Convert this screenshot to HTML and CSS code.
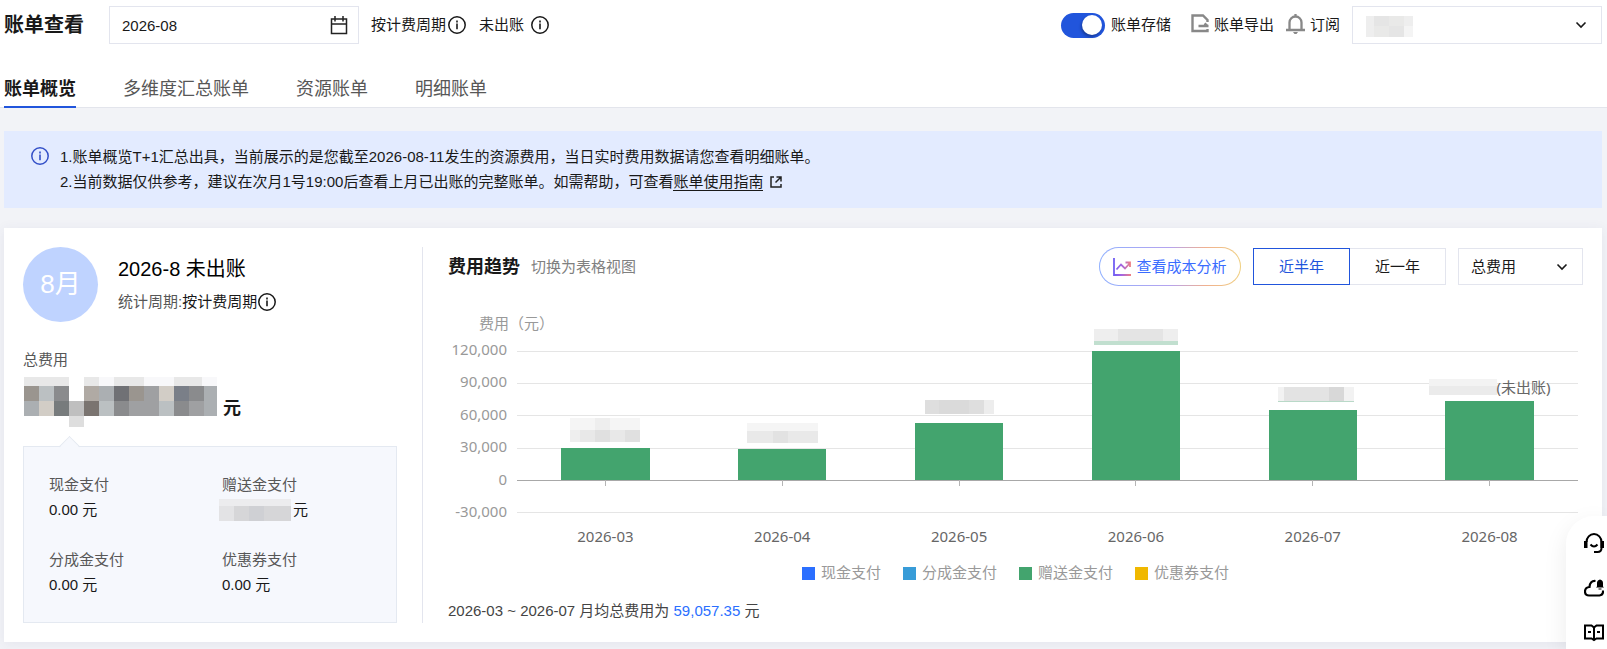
FILE: index.html
```html
<!DOCTYPE html>
<html lang="zh-CN">
<head>
    <meta charset="UTF-8">
    <meta name="viewport" content="width=device-width, initial-scale=1">
    <title>账单查看</title>
    <link rel="stylesheet" href="styles.css">
</head>
<body>

    <!-- shared icons -->
    <svg class="icon-defs" aria-hidden="true">
        <symbol id="icon-info" viewBox="0 0 18 18">
            <circle cx="9" cy="9" r="8.2" fill="none" stroke="currentColor" stroke-width="1.5"/>
            <path d="M9 7.6v5.6M9 4.6v1.8" fill="none" stroke="currentColor" stroke-width="1.6"/>
        </symbol>
        <symbol id="icon-down" viewBox="0 0 12 8">
            <path d="M1.500 1.500L6 6l4.500-4.500" fill="none" stroke="currentColor" stroke-width="1.6"/>
        </symbol>
    </svg>

    <header class="header">
        <div class="toolbar">
            <h1>账单查看</h1>
            <div class="field month-field">
                <input type="text" id="month" value="2026-08" aria-label="账期">
                <svg class="field-icon" width="18" height="19" viewBox="0 0 18 19" fill="none" stroke="#222" stroke-width="1.5">
                    <path d="M1.500 3h15v14.500h-15zM1.500 8h15M5 0v5.500M13 0v5.500"/>
                </svg>
            </div>
            <span class="hint">按计费周期<svg class="info"><use href="#icon-info"/></svg></span>
            <span class="hint hint-status">未出账<svg class="info"><use href="#icon-info"/></svg></span>

            <div class="actions">
                <label class="switch"><input type="checkbox" id="storage" checked>账单存储</label>
                <button class="action" type="button">
                    <svg width="18" height="19" viewBox="0 0 18 19" fill="none" stroke="#888" stroke-width="2.4">
                        <path d="M16.500 8V6L12 1.500H1.500v15.500H16.500V15M7.500 12h10M13.500 9.500l3 2.500"/>
                    </svg>账单导出
                </button>
                <button class="action" type="button">
                    <svg width="19" height="20" viewBox="0 0 19 20" fill="none" stroke="#888" stroke-width="2.3">
                        <path d="M0 16h19M3.500 16V8.500a6 6 0 0 1 12 0V16M9.500 0v2"/>
                        <path d="M7 18h5l-1.500 2h-2z" fill="#888" stroke="none"/>
                    </svg>订阅
                </button>
                <div class="field account-field">
                    <select id="account" aria-label="账号"><option></option></select>
                    <svg class="mosaic" width="47" height="21" viewBox="0 0 47 21" shape-rendering="crispEdges">
                        <path fill="#eee" d="M0 0h47v21H0z"/>
                        <path fill="#e5e5e5" d="M8 0h15v10H8zM23 10h15v11H23z"/>
                        <path fill="#e9e9e8" d="M23 0h15v10H23zM8 10h15v11H8z"/>
                        <path fill="#f4f4f4" d="M38 10h9v11h-9z"/>
                    </svg>
                    <svg class="down"><use href="#icon-down"/></svg>
                </div>
            </div>
        </div>

        <nav class="tabs">
            <a class="active" href="#overview">账单概览</a>
            <a href="#summary">多维度汇总账单</a>
            <a href="#resource">资源账单</a>
            <a href="#detail">明细账单</a>
        </nav>
    </header>

    <main>
        <section class="notice">
            <svg class="info"><use href="#icon-info"/></svg>
            <div>
                <p>1.账单概览T+1汇总出具，当前展示的是您截至2026-08-11发生的资源费用，当日实时费用数据请您查看明细账单。</p>
                <p>2.当前数据仅供参考，建议在次月1号19:00后查看上月已出账的完整账单。如需帮助，可查看<a href="#guide">账单使用指南</a>
                    <svg class="external" width="12" height="12" viewBox="0 0 12 12" fill="none" stroke="#222" stroke-width="1.500">
                        <path d="M4 1H1v10h10V8M6.500 1H11v4.500M11 1L5.500 6.500"/>
                    </svg>
                </p>
            </div>
        </section>

        <section class="card" id="overview">
            <div class="summary">
                <div class="bill-head">
                    <div class="month-badge">8月</div>
                    <div>
                        <h2>2026-8 未出账</h2>
                        <p class="cycle">统计周期:<span class="hint">按计费周期<svg class="info"><use href="#icon-info"/></svg></span></p>
                    </div>
                </div>
                <p class="total-label">总费用</p>
                <div class="total">
                    <svg width="193" height="50" viewBox="0 0 193 50" shape-rendering="crispEdges">
                        <path fill="#e8e8e8" d="M0 0h45v9H0zM60 0h15v9H60zM90 0h30v9H90zM150 0h28v9h-28z"/>
                        <path fill="#f8f8fa" d="M75 0h15v9H75zM120 0h30v9h-30zM178 0h15v9h-15z"/>
                        <path fill="#9a958f" d="M0 9h15v15H0zM105 9h15v15h-15z"/>
                        <path fill="#bbc0c2" d="M15 9h15v15H15zM75 24h15v15H75zM135 24h15v15h-15z"/>
                        <path fill="#8a8b8d" d="M30 9h15v15H30zM165 9h15v15h-15zM90 24h15v15H90zM150 24h15v15h-15z"/>
                        <path fill="#b0aaa4" d="M60 9h15v15H60z"/>
                        <path fill="#abafb2" d="M75 9h15v15H75zM180 9h13v30h-13zM0 24h15v15H0z"/>
                        <path fill="#707175" d="M90 9h15v15H90z"/>
                        <path fill="#9fa0a2" d="M120 9h15v30h-15zM105 24h15v15h-15zM165 24h15v15h-15z"/>
                        <path fill="#d2cdc6" d="M135 9h15v15h-15zM15 24h15v15H15z"/>
                        <path fill="#7a7f88" d="M150 9h15v15h-15z"/>
                        <path fill="#777b7c" d="M30 24h15v15H30z"/>
                        <path fill="#bfbfbf" d="M45 24h15v15H45z"/>
                        <path fill="#7a7470" d="M60 24h15v15H60z"/>
                        <path fill="#dedede" d="M45 39h15v11H45z"/>
                    </svg>
                    <strong>元</strong>
                </div>
                <dl class="breakdown">
                    <div>
                        <dt>现金支付</dt>
                        <dd>0.00 元</dd>
                    </div>
                    <div>
                        <dt>赠送金支付</dt>
                        <dd class="masked">
                            <svg width="72" height="22" viewBox="0 0 72 22" shape-rendering="crispEdges">
                                <path fill="#ececee" d="M0 0h72v7H0z"/>
                                <path fill="#e3e3e5" d="M0 7h15v15H0z"/>
                                <path fill="#d6d6d8" d="M15 7h57v15H15z"/>
                                <path fill="#cfd0d4" d="M30 7h15v15H30z"/>
                            </svg>元
                        </dd>
                    </div>
                    <div>
                        <dt>分成金支付</dt>
                        <dd>0.00 元</dd>
                    </div>
                    <div>
                        <dt>优惠券支付</dt>
                        <dd>0.00 元</dd>
                    </div>
                </dl>
            </div>

            <div class="trend">
                <div class="trend-head">
                    <h3>费用趋势</h3>
                    <a class="switch-view" href="#table">切换为表格视图</a>
                    <button class="analysis" type="button">
                        <svg width="18" height="18" viewBox="0 0 18 18" fill="none" stroke="url(#trend-color)" stroke-width="1.8">
                            <linearGradient id="trend-color" gradientUnits="userSpaceOnUse" x1="0" y1="0" x2="18" y2="0">
                                <stop offset="0" stop-color="#6a5cf5"/>
                                <stop offset="0.500" stop-color="#a566e0"/>
                                <stop offset="1" stop-color="#f08080"/>
                            </linearGradient>
                            <path d="M1 0v17h17M3.500 11.500L8 6.500l4 4L17 5M12.500 4.500H17V9"/>
                        </svg>查看成本分析
                    </button>
                    <div class="range">
                        <button class="active" type="button">近半年</button>
                        <button type="button">近一年</button>
                    </div>
                    <div class="field type-field">
                        <select id="feeType" aria-label="费用类型"><option>总费用</option></select>
                        <svg class="down"><use href="#icon-down"/></svg>
                    </div>
                </div>

                <div class="chart">
                    <p class="axis-title">费用（元）</p>
                    <div class="y-axis">
                        <span>120,000</span><span>90,000</span><span>60,000</span><span>30,000</span><span>0</span><span>-30,000</span>
                    </div>
                    <div class="plot">
                        <div class="grid-lines"><i></i><i></i><i></i><i></i><i class="zero"></i><i></i></div>
                        <div class="bars">
                            <div class="bar" style="height: 25%">
                                <svg width="70" height="24" viewBox="0 0 70 24" shape-rendering="crispEdges"><path fill="#f5f5f5" d="M0 0h70v12H0z"/><path fill="#e8e8e8" d="M0 12h70v12H0z"/><path fill="#eee" d="M25 0h15v12H25zM0 12h10v12H0z"/><path fill="#e0e0e0" d="M25 12h15v12H25zM55 12h15v12H55z"/></svg>
                            </div>
                            <div class="bar" style="height: 24%">
                                <svg width="71" height="20" viewBox="0 0 71 20" shape-rendering="crispEdges"><path fill="#f5f5f5" d="M0 0h71v8H0z"/><path fill="#e9e9e9" d="M0 8h71v12H0z"/><path fill="#e2e2e2" d="M26 8h15v12H26z"/></svg>
                            </div>
                            <div class="bar" style="height: 44%">
                                <svg width="69" height="17" viewBox="0 0 69 17" shape-rendering="crispEdges"><path fill="#dedede" d="M0 0h59v14H0z"/><path fill="#dadada" d="M14 0h30v14H14z"/><path fill="#ededed" d="M59 0h10v14H59z"/></svg>
                            </div>
                            <div class="bar" style="height: 100%">
                                <svg width="84" height="16" viewBox="0 0 84 16" shape-rendering="crispEdges"><path fill="#eee" d="M0 0h84v12H0z"/><path fill="#e4e4e4" d="M24 0h45v12H24z"/><path fill="#c1dfcf" d="M0 12h84v4H0z"/></svg>
                            </div>
                            <div class="bar" style="height: 54%">
                                <svg width="83" height="17" viewBox="-7 0 83 17" shape-rendering="crispEdges"><path fill="#f2f2f2" d="M0 0h76v14H0z"/><path fill="#e3e3e3" d="M6 0h60v14H6z"/><path fill="#d8d8d8" d="M51 0h15v14H51z"/><path fill="#b9d9c8" d="M0 14h76v1H0z"/></svg>
                            </div>
                            <div class="bar" style="height: 61%">
                                <span class="bar-label"><svg width="68" height="16" viewBox="0 0 68 16" shape-rendering="crispEdges"><path fill="#f3f3f3" d="M0 0h68v7H0z"/><path fill="#ebebeb" d="M0 7h68v9H0z"/></svg>(未出账)</span>
                            </div>
                        </div>
                    </div>
                    <div class="x-axis">
                        <span>2026-03</span><span>2026-04</span><span>2026-05</span><span>2026-06</span><span>2026-07</span><span>2026-08</span>
                    </div>
                </div>

                <ul class="legend">
                    <li class="cash">现金支付</li>
                    <li class="share">分成金支付</li>
                    <li class="gift">赠送金支付</li>
                    <li class="coupon">优惠券支付</li>
                </ul>
                <p class="average">2026-03 ~ 2026-07 月均总费用为 <b>59,057.35</b> 元</p>
            </div>
        </section>
    </main>

    <aside class="side-tools">
        <button type="button" aria-label="客服">
            <svg width="20" height="20" viewBox="0 0 20 20" fill="none" stroke="#000" stroke-width="2">
                <path d="M2.500 9a7.500 8 0 0 1 15 0v6q0 4-4 4H10M6.500 11.500q3.500 4 7 0"/>
                <path d="M0 8h3.500v7H0zM16.500 8H20v7h-3.500z" fill="#000" stroke="none"/>
            </svg>
        </button>
        <button type="button" aria-label="消息">
            <svg width="20" height="20" viewBox="0 0 20 20" fill="none" stroke="#000" stroke-width="2.2">
                <path d="M11.500 3Q6 2.500 5.500 9 1 9.500 1 13.500T5 17.500h10.500q4-.5 3.500-5"/>
                <path d="M12 9.500l1-1V5q0-3 3-3.500 3 .5 3 3.500v3.500l1 1zM14.500 10.500h3v1h-3z" fill="#000" stroke="none"/>
            </svg>
        </button>
        <button type="button" aria-label="文档">
            <svg width="20" height="20" viewBox="0 0 20 20" fill="none" stroke="#000" stroke-width="2">
                <path d="M1 2.500h6.500L10 4.500l2.500-2H19v13h-6.500L10 17l-2.500-1.500H1zM10 4.500V18M4 9h3M13 9h3"/>
            </svg>
        </button>
    </aside>

</body>
</html>
```

FILE: styles.css
```css
* {
    box-sizing: border-box;
}
body {
    margin: 0;
    min-height: 100vh;
    overflow-x: hidden;
    background: #f2f3f7;
    color: #191919;
    font-family: "Liberation Sans", "Noto Sans CJK SC", sans-serif;
    font-size: 15px;
    line-height: 24px;
}
h1, h2, h3, p, dl, dd, ul {
    margin: 0;
    padding: 0;
}
button, input, select {
    font: inherit;
    color: inherit;
}
button {
    padding: 0;
    border: 0;
    background: none;
    cursor: pointer;
}
svg {
    flex: none;
}
.icon-defs {
    display: none;
}
.info {
    width: 18px;
    height: 18px;
}
.down {
    position: absolute;
    right: 14px;
    width: 12px;
    height: 8px;
    pointer-events: none;
}

/* header */
.header {
    background: #fff;
    border-bottom: 1px solid #e3e5ec;
    padding: 6px 5px 0 4px;
}
.toolbar {
    display: flex;
    align-items: center;
    height: 38px;
}
h1 {
    font-size: 20px;
    margin-right: 25px;
}
.field {
    position: relative;
    display: flex;
    align-items: center;
    height: 38px;
    border: 1px solid #e3e5ee;
    background: #fff;
}
.field input, .field select {
    width: 100%;
    height: 100%;
    padding: 0 12px;
    border: 0;
    outline: 0;
    background: none;
    appearance: none;
}
.month-field {
    width: 250px;
    margin-right: 12px;
}
.field-icon {
    position: absolute;
    right: 10px;
}
.hint {
    display: inline-flex;
    align-items: center;
    gap: 2px;
}
.hint-status {
    margin-left: 13px;
    gap: 7px;
}
.actions {
    display: flex;
    align-items: center;
    margin-left: auto;
}
.switch {
    display: flex;
    align-items: center;
    gap: 6px;
    margin-right: 20px;
}
.switch input {
    display: flex;
    align-items: center;
    justify-content: flex-end;
    width: 44px;
    height: 25px;
    margin: 0;
    padding: 3px;
    border-radius: 13px;
    background: #2155dc;
    appearance: none;
}
.switch input::before {
    content: "";
    width: 20px;
    height: 20px;
    border-radius: 50%;
    background: #fff;
    box-shadow: -1px 2px 3px rgba(0, 0, 0, 0.3);
}
.switch input:not(:checked) {
    justify-content: flex-start;
    background: #bbb;
}
.action {
    display: flex;
    align-items: center;
    gap: 5px;
    margin-right: 12px;
}
.action svg {
    margin-bottom: 3px;
}
.account-field {
    width: 250px;
}
.mosaic {
    position: absolute;
    left: 13px;
    top: 9px;
}
.tabs {
    display: flex;
    gap: 47px;
    margin-top: 24px;
    margin-bottom: -1px;
    font-size: 18px;
}
.tabs a {
    height: 40px;
    line-height: 42px;
    color: #575757;
    text-decoration: none;
    border-bottom: 2px solid transparent;
}
.tabs .active {
    color: #191919;
    font-weight: bold;
    border-color: #2155dc;
}

/* notice */
main {
    padding: 23px 5px 7px 4px;
}
.notice {
    display: flex;
    gap: 11px;
    padding: 13px 27px 14px;
    background: #e3ebff;
    line-height: 25px;
}
.notice .info {
    margin-top: 3px;
    color: #3450c8;
}
.notice a {
    color: inherit;
    text-decoration: none;
    border-bottom: 1px solid #191919;
}
.external {
    margin-left: 2px;
    vertical-align: -1px;
}

/* bill card */
.card {
    display: flex;
    margin-top: 20px;
    padding: 19px;
    background: #fff;
    box-shadow: 0 2px 12px rgba(60, 70, 110, 0.08);
}
.summary {
    width: 400px;
    padding-right: 25px;
    border-right: 1px solid #e3e5ee;
}
.bill-head {
    display: flex;
    gap: 20px;
    height: 75px;
}
.month-badge {
    width: 75px;
    border-radius: 50%;
    background: #bfd3ff;
    color: #fff;
    font-size: 26px;
    line-height: 75px;
    text-align: center;
}
h2 {
    margin-top: 10px;
    font-size: 20px;
    font-weight: normal;
    color: #000;
}
.cycle {
    display: flex;
    margin-top: 9px;
    color: #575757;
}
.cycle .hint {
    gap: 1px;
    color: #191919;
}
.total-label {
    margin-top: 26px;
    color: #575757;
}
.total {
    display: flex;
    align-items: center;
    gap: 6px;
    height: 50px;
    margin: 5px 0 19px 1px;
}
.total strong {
    margin-top: 12px;
    font-size: 18px;
}
.breakdown {
    position: relative;
    display: grid;
    grid-template-columns: 173px 1fr;
    row-gap: 25px;
    height: 177px;
    padding: 25px;
    align-content: start;
    border: 1px solid #e4e9f1;
    background: #f6f8fd;
    line-height: 25px;
}
.breakdown::before {
    content: "";
    position: absolute;
    top: -8px;
    left: 38px;
    width: 14px;
    height: 14px;
    border: 1px solid #e4e9f1;
    border-width: 1px 0 0 1px;
    background: linear-gradient(135deg, #f6f8fd 50%, transparent 50%);
    transform: rotate(45deg);
}
.breakdown dt {
    color: #575757;
}
.masked {
    display: flex;
    align-items: center;
    gap: 2px;
    margin-left: -3px;
}

/* trend */
.trend {
    flex: 1;
    min-width: 0;
    padding-left: 25px;
}
.trend-head {
    display: flex;
    align-items: center;
    height: 39px;
}
h3 {
    margin-right: 11px;
    font-size: 18px;
}
.switch-view {
    color: #808080;
    text-decoration: none;
}
.analysis {
    display: flex;
    align-items: center;
    justify-content: center;
    gap: 5px;
    width: 142px;
    height: 39px;
    margin-left: auto;
    border: 1px solid transparent;
    border-radius: 20px;
    background: linear-gradient(#fff, #fff) padding-box, linear-gradient(90deg, #8fb0ff, #b5a3ee 50%, #f0b090 75%, #f0d080) border-box;
    color: #3a6cff;
}
.range {
    display: flex;
    margin: 0 12px;
}
.range button {
    width: 97px;
    height: 37px;
    border: 1px solid #e3e5ee;
}
.range .active {
    border-color: #2155dc;
    color: #2155dc;
}
.range button + button {
    width: 96px;
    border-left: 0;
}
.type-field {
    width: 125px;
    height: 37px;
}
.chart {
    display: grid;
    grid-template-columns: 59px 1fr;
    column-gap: 10px;
    margin: 25px 5px 0 0;
    font-family: "Noto Sans", "Noto Sans CJK SC", sans-serif;
    color: #999;
}
.axis-title {
    grid-column: 1 / 3;
    margin-left: 31px;
}
.y-axis {
    display: flex;
    flex-direction: column;
    justify-content: space-between;
    height: 186px;
    margin-top: 2px;
    text-align: right;
}
.plot {
    position: relative;
    height: 162px;
    margin-top: 16px;
}
.grid-lines {
    position: absolute;
    inset: 0;
    display: flex;
    flex-direction: column;
    justify-content: space-between;
}
.grid-lines i {
    height: 1px;
    background: #e5e5e5;
}
.grid-lines .zero {
    background: #a8a8a8;
}
.bars {
    position: relative;
    display: flex;
    align-items: flex-end;
    justify-content: space-around;
    height: 129px;
}
.bar {
    position: relative;
    display: flex;
    justify-content: center;
    width: 8.33%;
    background: #43a46e;
}
/* axis tick */
.bar::after {
    content: "";
    position: absolute;
    top: 100%;
    width: 1px;
    height: 6px;
    background: #b5b5b5;
}
.bar > svg, .bar-label {
    position: absolute;
    bottom: 100%;
    margin-bottom: 6px;
}
.bar-label {
    display: flex;
    align-items: center;
    line-height: 16px;
    color: #666;
    white-space: nowrap;
}
.x-axis {
    grid-column: 2;
    display: flex;
    margin-top: 1px;
    color: #666;
}
.x-axis span {
    flex: 1;
    text-align: center;
}
.legend {
    display: flex;
    justify-content: center;
    gap: 22px;
    margin-top: 13px;
    list-style: none;
    color: #999;
}
.legend li {
    display: flex;
    align-items: center;
    gap: 6px;
}
.legend li::before {
    content: "";
    width: 13px;
    height: 13px;
    background: currentColor;
}
.legend .cash::before {
    background: #2b6fff;
}
.legend .share::before {
    background: #389cd8;
}
.legend .gift::before {
    background: #43a46e;
}
.legend .coupon::before {
    background: #f0b800;
}
.average {
    margin-top: 14px;
    color: #444;
}
.average b {
    color: #2b6fff;
    font-weight: normal;
}

/* floating tools */
.side-tools {
    position: fixed;
    right: 0;
    bottom: 0;
    display: flex;
    flex-direction: column;
    gap: 25px;
    width: 41px;
    height: 133px;
    padding: 17px 3px 0 18px;
    overflow: hidden;
    border-radius: 28px 0 0 0;
    background: #fff;
    box-shadow: 0 8px 24px rgba(0, 0, 0, 0.08);
}
.side-tools button {
    height: 20px;
    line-height: 0;
}
```
